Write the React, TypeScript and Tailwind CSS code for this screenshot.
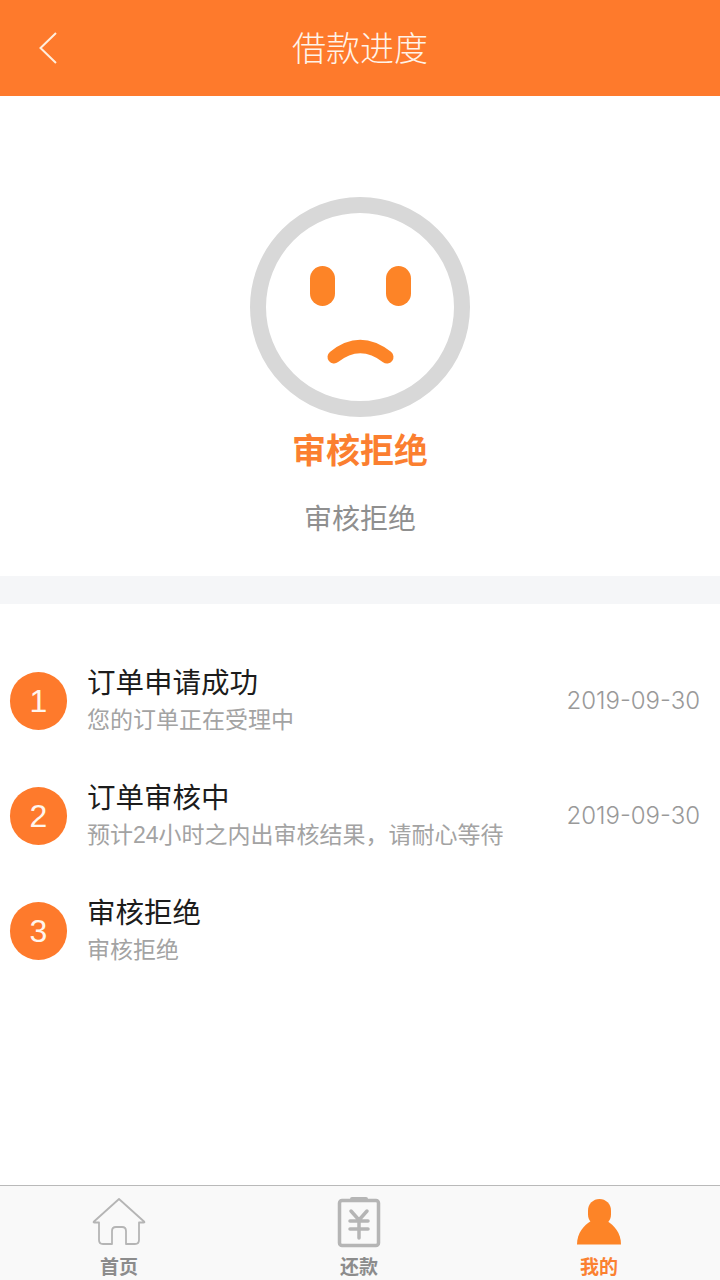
const FONT = 'font-["Helvetica_Neue","Liberation_Sans","Noto_Sans_CJK_SC",sans-serif]';

const steps = [
  { no: 1, title: '订单申请成功', desc: '您的订单正在受理中', date: '2019-09-30' },
  { no: 2, title: '订单审核中', desc: '预计24小时之内出审核结果，请耐心等待', date: '2019-09-30' },
  { no: 3, title: '审核拒绝', desc: '审核拒绝', date: '' },
];

function SadFace() {
  return (
    <svg width="220" height="220" viewBox="0 0 220 220" fill="none">
      <circle cx="110" cy="110" r="102" stroke="#d8d8d8" strokeWidth="16" />
      <rect x="60" y="69" width="25" height="40" rx="12.500" fill="#fd8427" />
      <rect x="136" y="69" width="25" height="40" rx="12.500" fill="#fd8427" />
      <path d="M84 160Q110 139 137 160" stroke="#fd8427" strokeWidth="13" strokeLinecap="round" />
    </svg>
  );
}

function HomeIcon() {
  return (
    <svg width="54" height="48" viewBox="0 0 54 48" fill="none" stroke="#b5b5b5" strokeWidth="1.800" strokeLinejoin="round">
      <path d="M27 1L2 23.500Q1 24.500 2.500 24.500H7V42Q7 46 11 46H20V33Q20 29 24 29H30Q34 29 34 33V46H43Q47 46 47 42V24.500H51.500Q53 24.500 52 23.500Z" />
    </svg>
  );
}

function RepayIcon() {
  return (
    <svg width="44" height="52" viewBox="0 0 44 52" fill="none">
      <rect x="2.500" y="4.500" width="39" height="45" rx="2.500" stroke="#b5b5b5" strokeWidth="3.500" />
      <rect x="13" y="1" width="18" height="5" rx="2" fill="#b5b5b5" />
      <path d="M14 15L22 24L30 15M13 25H31M13 33H31M22 24V42" stroke="#b5b5b5" strokeWidth="3.500" strokeLinecap="round" strokeLinejoin="round" />
    </svg>
  );
}

function MineIcon() {
  return (
    <svg width="46" height="46" viewBox="0 0 46 46" fill="#fd8427">
      <rect x="12" y="0" width="23" height="27" rx="11.500" />
      <path d="M15 22H31C38 26 45 34 45 45.500H1C1 34 8 26 15 22Z" />
    </svg>
  );
}

function Tab({ label, active, children }: { label: string; active?: boolean; children: React.ReactNode }) {
  return (
    <div className="flex-1 flex flex-col items-center pr-[2px]">
      <div className="h-[52px] flex items-center justify-center">{children}</div>
      <span className={`mt-[8px] text-[19px] leading-[24px] font-bold ${active ? 'text-[#fb8131]' : 'text-[#8c8c8c]'}`}>{label}</span>
    </div>
  );
}

export default function App() {
  return (
    <div className={`w-[720px] h-[1280px] bg-white flex flex-col overflow-hidden ${FONT}`}>
      <header className="relative h-[96px] shrink-0 bg-[#fe7a2c] flex items-center justify-center">
        <svg className="absolute left-[38px] top-[31px]" width="20" height="34" viewBox="0 0 20 34" fill="none">
          <path d="M18 2L2.500 17L18 32" stroke="#ffeedd" strokeWidth="2" />
        </svg>
        <h1 className="text-[34px] leading-none font-light text-[#fff3e8] pt-[2px]">借款进度</h1>
      </header>

      <section className="h-[480px] shrink-0 flex flex-col items-center pt-[101px]">
        <SadFace />
        <p className="mt-[14px] text-[34px] leading-[40px] font-bold text-[#fb7f30]">审核拒绝</p>
        <p className="mt-[29px] text-[28px] leading-[40px] text-[#8f8f8f]">审核拒绝</p>
      </section>

      <div className="h-[28px] shrink-0 bg-[#f5f6f8]" />

      <ul className="flex-1 pt-[39px]">
        {steps.map(s => (
          <li key={s.no} className="h-[115px] flex items-center pl-[10px] pr-[20px]">
            <div className="w-[57px] h-[58px] rounded-full bg-[#fe7a2c] flex items-center justify-center text-[32px] leading-none font-light text-[#fff6ee]">
              {s.no}
            </div>
            <div className="ml-[20px] flex-1">
              <p className="text-[28.500px] leading-[38px] text-[#1c1c1c] -mt-[1px] mb-[1px]">{s.title}</p>
              <p className="text-[23px] leading-[34px] text-[#a3a3a3]">{s.desc}</p>
            </div>
            {s.date && <span className='font-["Inter",sans-serif] font-light text-[24px] text-[#999999]'>{s.date}</span>}
          </li>
        ))}
      </ul>

      <nav className="h-[95px] shrink-0 bg-[#f9f9f9] border-t border-[#b9b9b9] flex pt-[10px]">
        <Tab label="首页"><HomeIcon /></Tab>
        <Tab label="还款"><RepayIcon /></Tab>
        <Tab label="我的" active><MineIcon /></Tab>
      </nav>
    </div>
  );
}
